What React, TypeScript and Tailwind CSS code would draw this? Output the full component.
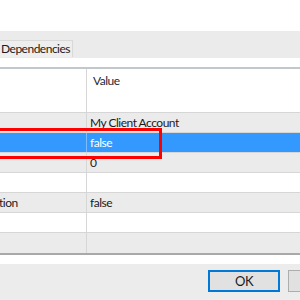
const rows = [
	{ label: '', value: 'My Client Account', tone: 'gray' },
	{ label: '', value: 'false', tone: 'selected' },
	{ label: '', value: '0', tone: 'gray' },
	{ label: '', value: '', tone: 'white' },
	{ label: 'tion', value: 'false', tone: 'gray' },
	{ label: '', value: '', tone: 'white' },
	{ label: '', value: '', tone: 'gray' },
];

function PropertyRow({ label, value, tone, last }: { label: string; value: string; tone: string; last: boolean }) {
	const selected = tone === 'selected';
	const bg = selected ? 'bg-[#3399ff] text-white' : tone === 'gray' ? 'bg-[#ebebeb] text-[#1b1b1b]' : 'bg-white text-[#1b1b1b]';
	return (
		<div className={`flex h-[20px] ${last ? '' : 'border-b border-[#d6d6d6]'} ${bg}`}>
			<div className={`flex w-[87px] shrink-0 items-center border-r ${selected ? 'border-[#7dbcff]' : 'border-[#d6d6d6]'}`}>
				<span className="-ml-[1px] whitespace-nowrap">{label}</span>
			</div>
			<div className="flex items-center whitespace-nowrap pl-[3px]">{value}</div>
		</div>
	);
}

export default function App() {
	return (
		<div className="relative h-[300px] w-[300px] overflow-hidden bg-white font-['Lato','Noto_Sans',sans-serif] text-[12px] leading-[16px] tracking-[-0.5px] text-[#1b1b1b]">
			<div className="h-[31px]" />

			{/* tab strip */}
			<div className="flex h-[27px] items-end bg-[#ebebeb]">
				<div className="mb-[1px] flex h-[17px] w-[73px] items-center border-r border-t border-[#d9d9d9] bg-[#eeeeee] pl-[1px]">
					Dependencies
				</div>
			</div>

			<div className="h-[9px]" />

			{/* property grid */}
			<div className="border-t-2 border-[#c2c7cb]">
				<div className="flex h-[44px] border-b border-[#d6d6d6] bg-white">
					<div className="w-[87px] shrink-0 border-r border-[#d6d6d6]" />
					<div className="pl-[6px] pt-[4px] text-[#1b2a3a]">Value</div>
				</div>
				{rows.map((r, i) => (
					<PropertyRow key={i} {...r} last={i === rows.length - 1} />
				))}
			</div>
			<div className="h-[2px] bg-[#a9a9a9]" />
			<div className="h-[9px]" />

			{/* dialog buttons */}
			<div className="flex h-[37px] gap-[8px] bg-[#ececec] pl-[208px] pt-[6px]">
				<button className="flex h-[22px] w-[72px] shrink-0 items-center justify-center border-2 border-[#0078d7] bg-[#e1e1e1] text-[13px] text-[#1b1b1b]">
					OK
				</button>
				<button className="h-[22px] w-[75px] shrink-0 border border-[#adadad] bg-[#e1e1e1]" />
			</div>

			{/* red annotation box */}
			<div className="absolute left-[-10px] top-[128px] h-[31px] w-[172px] border-[3px] border-[#ff0000]" />
		</div>
	);
}
